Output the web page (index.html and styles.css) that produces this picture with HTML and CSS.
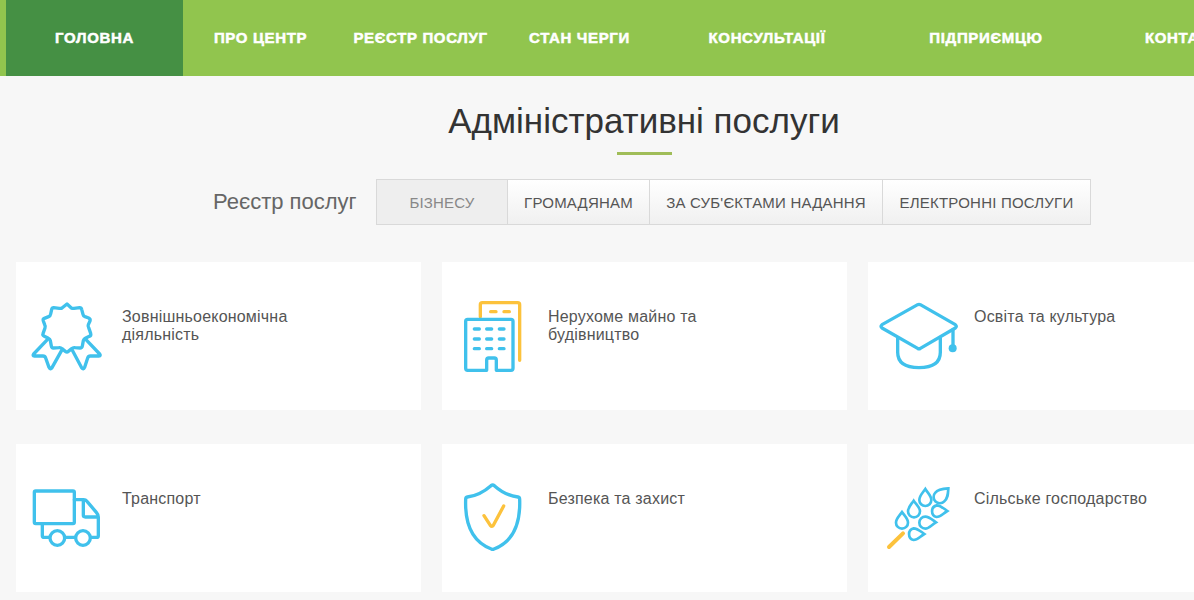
FILE: index.html
```html
<!DOCTYPE html>
<html lang="uk">
<head>
<meta charset="utf-8">
<title>Адміністративні послуги</title>
<link rel="stylesheet" href="styles.css">
</head>
<body>
<nav class="nav">
  <a class="nav-item nav-home">ГОЛОВНА</a>
  <a class="nav-item nav-about">ПРО ЦЕНТР</a>
  <a class="nav-item nav-registry">РЕЄСТР ПОСЛУГ</a>
  <a class="nav-item nav-queue">СТАН ЧЕРГИ</a>
  <a class="nav-item nav-consult">КОНСУЛЬТАЦІЇ</a>
  <a class="nav-item nav-business">ПІДПРИЄМЦЮ</a>
  <a class="nav-item nav-contacts">КОНТАКТИ</a>
</nav>
<main class="main">
  <h1 class="title"><span class="title-text">Адміністративні послуги</span></h1>
  <div class="filter">
    <span class="filter-label">Реєстр послуг</span>
    <div class="tabs">
      <a class="tab tab-active">БІЗНЕСУ</a>
      <a class="tab tab-people">ГРОМАДЯНАМ</a>
      <a class="tab tab-subjects">ЗА СУБ'ЄКТАМИ НАДАННЯ</a>
      <a class="tab tab-online">ЕЛЕКТРОННІ ПОСЛУГИ</a>
    </div>
  </div>
  <div class="cards">
    <a class="card">
      <svg class="icon" viewBox="18 21 318 444">
        <path d="M171 147 184 159Q188 161 192 160L209 158Q214 158 215 163L219 178Q220 183 225 185L236 189Q242 192 240 198L235 209Q233 214 236 218L242 235Q244 242 238 244L226 250Q222 252 220 257L217 273Q216 279 210 279L195 278Q189 277 185 281L175 289Q171 293 166 289L156 281Q152 277 147 278L130 279Q125 279 124 273L121 257Q120 252 115 250L103 244Q97 241 99 236L105 219Q107 214 104 209L100 198Q98 192 103 190L116 185Q121 183 122 177L125 163Q126 158 131 158L148 160Q153 161 156 159Z"/>
        <path d="M112 254 71 297Q67 303 73 303L99 303Q105 303 107 309L117 337Q121 345 126 338L155 286M228 254 269 297Q273 303 267 303L241 303Q235 303 233 309L224 337Q220 345 215 338L187 286"/>
      </svg>
      <span class="card-text">Зовнішньоекономічна<br>діяльність</span>
    </a>
    <a class="card">
      <svg class="icon" viewBox="18 21 318 444">
        <path class="gold" d="M133 185V149Q133 143 139 143H245Q251 143 251 149V316M164 170H180M204 170H220"/>
        <path d="M152 346H95Q89 346 89 340V199Q89 193 95 193H225Q231 193 231 199V340Q231 346 225 346H181V316Q181 309 175 309H158Q152 309 152 316V346Z" class="facade"/>
        <path d="M115 222H130M152 222H167M190 222H204M115 252H130M152 252H167M190 252H204M115 281H130M152 281H167M190 281H204"/>
      </svg>
      <span class="card-text">Нерухоме майно та<br>будівництво</span>
    </a>
    <a class="card">
      <svg class="icon" viewBox="24 21 318 444">
        <path d="M173 149Q177 147 181 149L286 209Q292 214 286 219L181 280Q177 283 173 280L66 219Q60 214 66 209Z"/>
        <path d="M113 250V292Q113 338 177 338Q241 338 241 292V250M279 224V272"/>
        <circle class="dot" cx="278" cy="280" r="12"/>
      </svg>
      <span class="card-text">Освіта та культура</span>
    </a>
    <a class="card">
      <svg class="icon" viewBox="18 12 318 444">
        <rect x="73" y="153" width="120" height="98" rx="4"/>
        <path d="M193 179H221Q227 179 231 184L259 217Q265 224 265 231V287Q265 292 260 292H245M97 252V287Q97 292 103 292H118M166 292H194M220 181V226Q220 231 226 231H264"/>
        <circle cx="142" cy="294" r="22"/><circle cx="219" cy="294" r="22"/>
      </svg>
      <span class="card-text">Транспорт</span>
    </a>
    <a class="card">
      <svg class="icon" viewBox="18 12 318 444">
        <path d="M165 137Q170 133 175 137Q207 166 246 171Q251 172 251 178C254 260 226 307 174 327Q170 329 166 327C113 307 86 260 89 178Q89 172 94 171Q132 166 165 137Z"/>
        <path class="gold" d="M144 227 163 256Q168 262 172 256L203 198"/>
      </svg>
      <span class="card-text">Безпека та захист</span>
    </a>
    <a class="card">
      <svg class="icon" viewBox="24 12 318 444">
        <g class="grain">
          <path d="M196 147C187 160 178 167 178 180A18 18 0 0 0 214 180C214 167 204 160 196 147Z"/>
          <path d="M161 182C152 195 144 202 144 214A18 18 0 0 0 180 214C180 202 170 195 161 182Z"/>
          <path d="M126 216C117 229 108 236 108 248A18 18 0 0 0 144 248C144 236 135 229 126 216Z"/>
          <path d="M265 145C246 146 233 148 226 158A18 18 0 0 0 253 184C264 174 264 162 265 145Z"/>
          <path d="M262 213C248 203 241 196 230 196A18 18 0 0 0 230 231C242 231 248 221 262 213Z"/>
          <path d="M228 247C214 237 207 230 196 230A18 18 0 0 0 196 266C208 266 214 255 228 247Z"/>
          <path d="M193 282C179 272 172 265 161 265A18 18 0 0 0 161 300C173 300 179 290 193 282Z"/>
        </g>
        <path class="gold stalk" d="M87 321 129 280"/>
      </svg>
      <span class="card-text">Сільське господарство</span>
    </a>
  </div>
</main>
</body>
</html>
```
FILE: styles.css
```css
body { margin: 0; width: 1194px; height: 600px; overflow: hidden; background: #f7f7f7; font-family: "Liberation Sans", Arial, sans-serif; }
.nav { display: flex; box-sizing: border-box; height: 76px; padding-left: 6px; background: #91c54e; overflow: hidden; }
.nav-item { flex: none; display: flex; align-items: center; justify-content: center; color: #fff; font-size: 15px; font-weight: 700; letter-spacing: 0.65px; -webkit-text-stroke: 0.5px #fff; white-space: nowrap; padding-bottom: 2px; }
.nav-home { width: 177px; background: #459044; }
.nav-about { width: 155px; }
.nav-registry { width: 165px; }
.nav-queue { width: 153px; }
.nav-consult { width: 222px; }
.nav-business { width: 216px; }
.nav-contacts { padding-left: 51px; }
.main { width: 1288px; }
.title { display: flex; flex-direction: column; align-items: center; margin: 0; padding-top: 25px; font-size: 35px; line-height: 40px; font-weight: 400; color: #333; }
.title::after { content: ""; width: 55px; height: 3px; margin-top: 11px; background: #a0bd58; }
.filter { display: flex; align-items: center; padding: 24px 0 0 213px; }
.filter-label { width: 163px; font-size: 22px; color: #666; white-space: nowrap; }
.tabs { display: flex; box-sizing: border-box; height: 46px; border: 1px solid #d9d9d9; background: linear-gradient(#fff, #f0f0f0); }
.tab { display: flex; align-items: center; justify-content: center; box-sizing: border-box; font-size: 15px; letter-spacing: 0.2px; color: #555; white-space: nowrap; border-right: 1px solid #d9d9d9; }
.tab-active { width: 131px; background: #eee; color: #888; }
.tab-people { width: 142px; }
.tab-subjects { width: 233px; }
.tab-online { width: 207px; border-right: 0; }
.cards { display: grid; grid-template-columns: repeat(3, 405px); grid-auto-rows: 148px; gap: 34px 21px; padding: 37px 0 0 16px; }
.card { display: flex; background: #fff; color: #555; }
.icon { flex: none; width: 106px; height: 148px; fill: none; stroke: #40c1ec; stroke-width: 10; stroke-linecap: round; stroke-linejoin: round; }
.gold { stroke: #fcc23c; }
.dot { fill: #40c1ec; stroke: none; }
.grain { stroke-width: 8; stroke-linejoin: miter; }
.stalk { stroke-width: 12; }
.card-text { padding-top: 46px; font-size: 16px; line-height: 18px; letter-spacing: 0.2px; white-space: nowrap; }
```
